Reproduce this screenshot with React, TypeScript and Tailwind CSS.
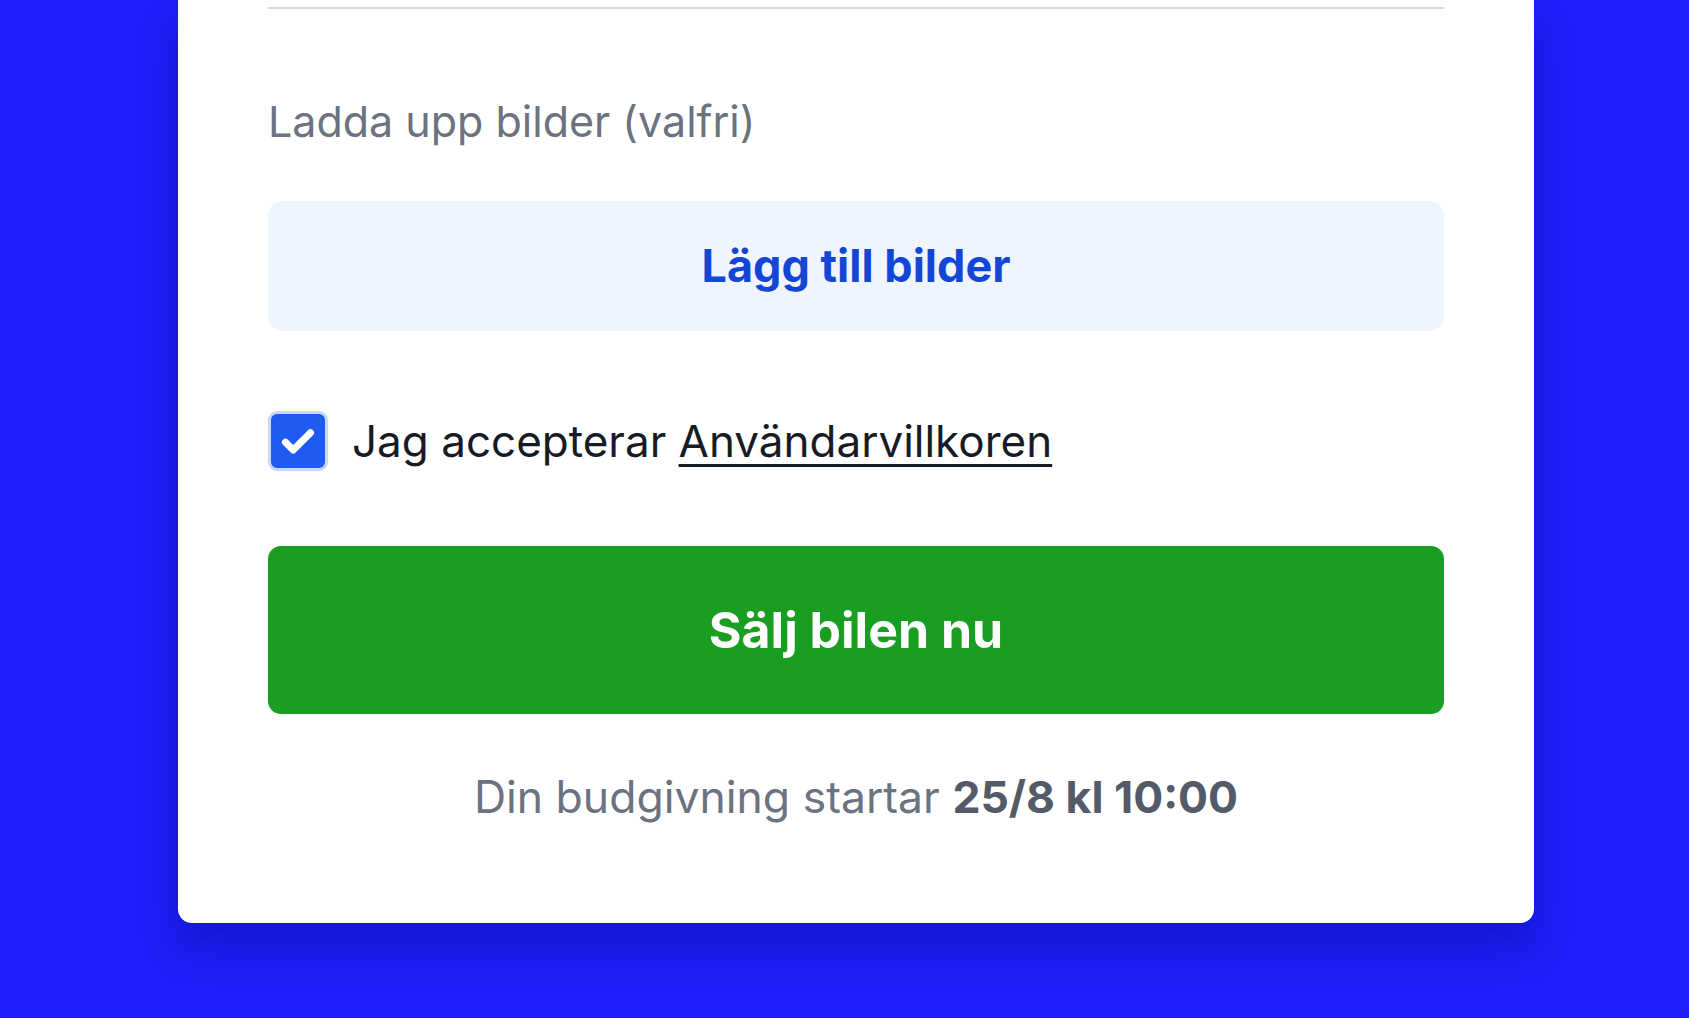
export default function App() {
  return (
    <div
      className="h-[1018px] w-full overflow-hidden bg-[#1e1ffa] pl-[178px] pr-[155px]"
      style={{ fontFamily: "Inter, 'Noto Sans', sans-serif" }}
    >
      <div className="rounded-b-[14px] bg-white px-[90px] pb-[99px] shadow-[0_24px_40px_rgba(10,10,120,0.35)]">
        <div className="pt-[7px]">
          <div className="h-[2px] bg-[#d4d6da]" />
        </div>

        <div className="mt-[86px] text-[43px] leading-[53px] text-[#6b7280]">
          Ladda upp bilder (valfri)
        </div>

        <button className="mt-[53px] flex h-[130px] w-full items-center justify-center rounded-[15px] bg-[#eef5ff] text-[45px] font-bold text-[#1446d6]">
          Lägg till bilder
        </button>

        <label className="mt-[80px] flex items-center gap-[24px]">
          <span className="flex h-[60px] w-[60px] items-center justify-center rounded-[9px] border-[3px] border-[#c9d6f5] bg-[#1d5bf3]">
            <svg width="40" height="40" viewBox="0 0 24 24" fill="none">
              <path d="M4.5 12.8l4.6 4.6L19.5 7" stroke="white" strokeWidth="4.2" strokeLinecap="round" strokeLinejoin="round" />
            </svg>
          </span>
          <span className="text-[44px] leading-[53px] text-[#161b26]">
            Jag accepterar <span className="underline decoration-[3px] underline-offset-[7px]">Användarvillkoren</span>
          </span>
        </label>

        <button className="mt-[75px] flex h-[168px] w-full items-center justify-center rounded-[13px] bg-[#1a9e22] text-[50px] font-bold text-white">
          Sälj bilen nu
        </button>

        <div className="mt-[57px] text-center text-[44.5px] leading-[53px] text-[#6b7280]">
          Din budgivning startar <span className="font-bold text-[#545b68]">25/8 kl 10:00</span>
        </div>
      </div>
    </div>
  );
}
